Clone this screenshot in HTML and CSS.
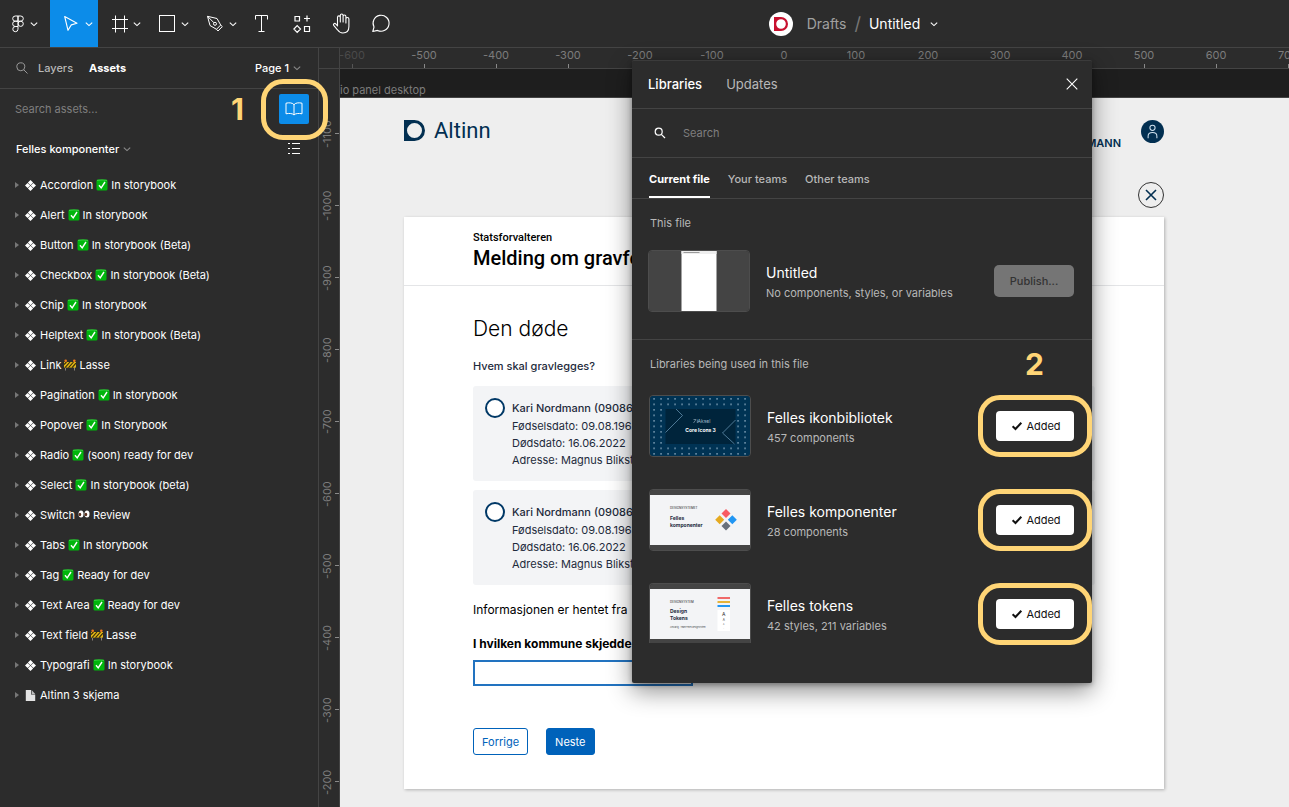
FILE: index.html
```html
<!DOCTYPE html>
<html lang="nb">
<head>
<meta charset="utf-8">
<title>Untitled – Libraries</title>
<link rel="stylesheet" href="styles.css">
</head>
<body>
<svg class="defs" aria-hidden="true">
  <symbol id="chev" viewBox="0 0 8 8"><path d="M.8 2.6 4 5.6 7.200 2.600" fill="none" stroke="currentColor" stroke-width="1.1"/></symbol>
  <symbol id="arrow" viewBox="0 0 4 6"><path d="M0 0 4 3 0 6z" fill="currentColor"/></symbol>
  <symbol id="dia" viewBox="0 0 11 11"><path d="M5.500 0 8.100 2.600 5.500 5.200 2.900 2.600zM5.500 5.800 8.100 8.400 5.500 11 2.900 8.400zM2.600 2.900 5.200 5.500 2.600 8.100 0 5.500zM8.400 2.900 11 5.500 8.400 8.100 5.800 5.500z" fill="#fff"/></symbol>
  <symbol id="ok" viewBox="0 0 12 12"><rect x=".5" y=".5" width="11" height="11" rx="1.500" fill="#00b60c"/><path d="M1 1.400q5-1 10 0" stroke="#5fe065" stroke-width=".6" fill="none"/><path d="M3 6.300 5.200 8.900 9 3" stroke="#fff" stroke-width="1.400" fill="none"/></symbol>
  <symbol id="barrier" viewBox="0 0 12 12"><path d="M1.500 3v8.500M10.500 3v8.500" stroke="#8a8178" stroke-width="1"/><rect x="0" y="3" width="12" height="5.600" fill="#e0b416"/><path d="M0 5.500 2.500 3M1 8.600 6 3M4.500 8.600 9.500 3M8 8.600l4-4.500" stroke="#33290a" stroke-width="1.100"/><circle cx="1.700" cy="1.700" r="1.300" fill="#f07a1a"/><circle cx="10.300" cy="1.700" r="1.300" fill="#f07a1a"/></symbol>
  <symbol id="eyes" viewBox="0 0 12 12"><ellipse cx="3" cy="5" rx="2.500" ry="3.600" fill="#fff"/><ellipse cx="9" cy="5" rx="2.500" ry="3.600" fill="#fff"/><ellipse cx="1.900" cy="5.500" rx="1.300" ry="1.800" fill="#5a2f1c"/><ellipse cx="7.900" cy="5.500" rx="1.300" ry="1.800" fill="#5a2f1c"/></symbol>
  <symbol id="page" viewBox="0 0 11 11"><path d="M.8 0H6v4.500h4.200V11H.8z" fill="#e3e3e3"/><path d="M6.600 0l3.600 3.900H6.600z" fill="#bdbdbd"/></symbol>
  <symbol id="tick" viewBox="0 0 12 12"><path d="M1.600 6.300 4.500 9 10.300 2.700" fill="none" stroke="#111" stroke-width="2"/></symbol>
</svg>

<header class="toolbar">
  <nav class="tools" aria-label="Tools">
    <button class="tool menu" aria-label="Main menu">
      <svg class="ico" viewBox="0 0 24 24"><g fill="none" stroke="#fff"><path d="M12 4H9.300a2.500 2.500 0 0 0 0 5.200H12zM12 4h2.700a2.500 2.500 0 0 1 0 5.200H12zM12 9.200H9.300a2.600 2.600 0 0 0 0 5.300H12zM9.300 14.500a2.600 2.600 0 1 0 2.700 2.700V14.500z"/><circle cx="14.700" cy="11.800" r="2.600"/></g></svg>
      <svg class="chev"><use href="#chev"/></svg>
    </button>
    <button class="tool active" aria-label="Move">
      <svg class="ico" viewBox="0 0 24 24"><path d="M4.700 4.500 17 11.300 11.300 12.900 8 18.300z" fill="none" stroke="#fff" stroke-width="1.100" stroke-linejoin="round"/></svg>
      <svg class="chev"><use href="#chev"/></svg>
    </button>
    <button class="tool" aria-label="Frame">
      <svg class="ico" viewBox="0 0 24 24"><path d="M7.500 3.500v17M16.500 3.500v17M4 7.500h16M4 16.500h16" stroke="#fff" fill="none"/></svg>
      <svg class="chev"><use href="#chev"/></svg>
    </button>
    <button class="tool" aria-label="Rectangle">
      <svg class="ico" viewBox="0 0 24 24"><rect x="3.500" y="3.500" width="15" height="16" fill="none" stroke="#fff"/></svg>
      <svg class="chev"><use href="#chev"/></svg>
    </button>
    <button class="tool" aria-label="Pen">
      <svg class="ico" viewBox="0 0 24 24"><g fill="none" stroke="#fff" stroke-linejoin="round"><path d="M3.500 4.300 6 13.500 12.500 17.300 16.700 13 13 6.500z"/><path d="M3.500 4.300 10 10.800M12.500 17.300 14 19 18.300 14.600 16.700 13"/><circle cx="11" cy="11.800" r="1.500"/></g></svg>
      <svg class="chev"><use href="#chev"/></svg>
    </button>
    <button class="tool single" aria-label="Text">
      <svg class="ico" viewBox="0 0 24 24"><path d="M5.500 7.500v-4h12v4M11.500 3.500v16M8.500 19.500h6" stroke="#fff" fill="none"/></svg>
    </button>
    <button class="tool single" aria-label="Resources">
      <svg class="ico" viewBox="0 0 24 24"><g fill="none" stroke="#fff" stroke-width="1.200"><path d="M5 4.500h4.500v4.500H5zM14.500 14.500h5v5h-5zM17 3.500v6M14 6.500h6M7.200 13.700 10.500 17l-3.300 3.300L3.900 17z"/></g></svg>
    </button>
    <button class="tool single" aria-label="Hand">
      <svg class="ico" viewBox="0 0 24 24"><path d="M7.500 14V5.300a1.400 1.400 0 0 1 2.800 0V10 3.400a1.400 1.400 0 0 1 2.800 0V10 4.400a1.400 1.400 0 0 1 2.800 0V11 7a1.400 1.400 0 0 1 3 0v7.500c0 4-2.400 6.500-6 6.500-2.800 0-4-1-5.400-3.200L3.700 13.400c-.9-1.500 1-2.600 2-1.500z" fill="none" stroke="#fff" stroke-width="1.100" stroke-linejoin="round"/></svg>
    </button>
    <button class="tool single" aria-label="Comment">
      <svg class="ico" viewBox="0 0 24 24"><path d="M2.800 19.500 4 15A8 8 0 1 1 7.500 18.400z" fill="none" stroke="#fff" stroke-width="1.100" stroke-linejoin="round"/></svg>
    </button>
  </nav>
  <div class="filename">
    <svg class="team" viewBox="0 0 24 24"><circle cx="12" cy="12" r="12" fill="#fff"/><path fill-rule="evenodd" d="M5 5h7a7 7 0 0 1 0 14H5zM12 7.200a4.800 4.800 0 1 0 0 9.600 4.800 4.800 0 0 0 0-9.600z" fill="#c8102e"/></svg>
    <span class="drafts">Drafts</span><span class="slash">/</span><span>Untitled</span>
    <svg class="chev"><use href="#chev"/></svg>
  </div>
</header>

<div class="workspace">
  <aside class="sidebar">
    <div class="side-tabs">
      <svg class="lens" viewBox="0 0 12 12"><g fill="none" stroke="#9a9a9a"><circle cx="4.800" cy="4.800" r="4"/><path d="M7.700 7.700 11.500 11.500"/></g></svg>
      <button class="side-tab">Layers</button>
      <button class="side-tab on">Assets</button>
      <button class="pages">Page 1 <svg class="chev dim"><use href="#chev"/></svg></button>
    </div>
    <div class="asset-search">
      <input type="text" aria-label="Search assets" placeholder="Search assets...">
      <span class="step step-one">1</span>
      <span class="ringed ring-book">
        <button class="book" aria-label="Team library"><svg viewBox="0 0 18 14"><path d="M9 2.800C8 .8 4 .4 1 1.200V11.800c3-.7 7-.4 8 1.200 1-1.600 5-1.900 8-1.200V1.200C14 .4 10 .8 9 2.800zV13" fill="none" stroke="#fff"/></svg></button>
      </span>
    </div>
    <div class="lib-head">
      <button class="lib-name">Felles komponenter <svg class="chev dim"><use href="#chev"/></svg></button>
      <button class="list-btn" aria-label="Show as list"><svg viewBox="0 0 12 12"><path d="M0 .5h2M4 .5h8M0 5.500h2M4 5.500h8M0 10.500h2M4 10.500h8" stroke="#fff"/></svg></button>
    </div>
    <ul class="assets">
      <li><svg class="arr"><use href="#arrow"/></svg><svg class="dia"><use href="#dia"/></svg><span>Accordion</span><svg class="emo"><use href="#ok"/></svg><span>In storybook</span></li>
      <li><svg class="arr"><use href="#arrow"/></svg><svg class="dia"><use href="#dia"/></svg><span>Alert</span><svg class="emo"><use href="#ok"/></svg><span>In storybook</span></li>
      <li><svg class="arr"><use href="#arrow"/></svg><svg class="dia"><use href="#dia"/></svg><span>Button</span><svg class="emo"><use href="#ok"/></svg><span>In storybook (Beta)</span></li>
      <li><svg class="arr"><use href="#arrow"/></svg><svg class="dia"><use href="#dia"/></svg><span>Checkbox</span><svg class="emo"><use href="#ok"/></svg><span>In storybook (Beta)</span></li>
      <li><svg class="arr"><use href="#arrow"/></svg><svg class="dia"><use href="#dia"/></svg><span>Chip</span><svg class="emo"><use href="#ok"/></svg><span>In storybook</span></li>
      <li><svg class="arr"><use href="#arrow"/></svg><svg class="dia"><use href="#dia"/></svg><span>Helptext</span><svg class="emo"><use href="#ok"/></svg><span>In storybook (Beta)</span></li>
      <li><svg class="arr"><use href="#arrow"/></svg><svg class="dia"><use href="#dia"/></svg><span>Link</span><svg class="emo"><use href="#barrier"/></svg><span>Lasse</span></li>
      <li><svg class="arr"><use href="#arrow"/></svg><svg class="dia"><use href="#dia"/></svg><span>Pagination</span><svg class="emo"><use href="#ok"/></svg><span>In storybook</span></li>
      <li><svg class="arr"><use href="#arrow"/></svg><svg class="dia"><use href="#dia"/></svg><span>Popover</span><svg class="emo"><use href="#ok"/></svg><span>In Storybook</span></li>
      <li><svg class="arr"><use href="#arrow"/></svg><svg class="dia"><use href="#dia"/></svg><span>Radio</span><svg class="emo"><use href="#ok"/></svg><span>(soon) ready for dev</span></li>
      <li><svg class="arr"><use href="#arrow"/></svg><svg class="dia"><use href="#dia"/></svg><span>Select</span><svg class="emo"><use href="#ok"/></svg><span>In storybook (beta)</span></li>
      <li><svg class="arr"><use href="#arrow"/></svg><svg class="dia"><use href="#dia"/></svg><span>Switch</span><svg class="emo"><use href="#eyes"/></svg><span>Review</span></li>
      <li><svg class="arr"><use href="#arrow"/></svg><svg class="dia"><use href="#dia"/></svg><span>Tabs</span><svg class="emo"><use href="#ok"/></svg><span>In storybook</span></li>
      <li><svg class="arr"><use href="#arrow"/></svg><svg class="dia"><use href="#dia"/></svg><span>Tag</span><svg class="emo"><use href="#ok"/></svg><span>Ready for dev</span></li>
      <li><svg class="arr"><use href="#arrow"/></svg><svg class="dia"><use href="#dia"/></svg><span>Text Area</span><svg class="emo"><use href="#ok"/></svg><span>Ready for dev</span></li>
      <li><svg class="arr"><use href="#arrow"/></svg><svg class="dia"><use href="#dia"/></svg><span>Text field</span><svg class="emo"><use href="#barrier"/></svg><span>Lasse</span></li>
      <li><svg class="arr"><use href="#arrow"/></svg><svg class="dia"><use href="#dia"/></svg><span>Typografi</span><svg class="emo"><use href="#ok"/></svg><span>In storybook</span></li>
      <li><svg class="arr"><use href="#arrow"/></svg><svg class="dia"><use href="#page"/></svg><span>Altinn 3 skjema</span></li>
    </ul>
  </aside>

  <main class="stage">
    <div class="corner"></div>
    <div class="ruler-x">
      <span class="faint">-600</span><span>-500</span><span>-400</span><span>-300</span><span>-200</span><span>-100</span><span>0</span><span>100</span><span>200</span><span>300</span><span>400</span><span>500</span><span>600</span><span>700</span>
    </div>
    <div class="ruler-y">
      <span>-1100</span><span>-1000</span><span>-900</span><span>-800</span><span>-700</span><span>-600</span><span>-500</span><span>-400</span><span>-300</span><span>-200</span>
    </div>
    <div class="canvas">
      <div class="frame-label">io panel desktop</div>
      <div class="frame">
        <div class="page">
          <div class="page-head">
            <svg class="logo" viewBox="0 0 21 21"><path fill-rule="evenodd" d="M0 0h10.500a10.500 10.500 0 0 1 0 21H0zM10.500 3a7.500 7.500 0 1 0 0 15 7.500 7.500 0 0 0 0-15z" fill="#022f51"/></svg>
            <span class="brand">Altinn</span>
            <span class="user">NORDMANN</span>
            <svg class="avatar" viewBox="0 0 22 22"><circle cx="11" cy="11" r="11" fill="#022f51"/><g fill="none" stroke="#cfe0ee"><circle cx="11" cy="7.500" r="2.500"/><path d="M6.800 17.500v-2q0-3.500 4.200-3.500t4.200 3.500v2"/></g></svg>
          </div>
          <div class="close-row">
            <button class="round-close" aria-label="Lukk"><svg viewBox="0 0 12 12"><path d="M1 1 11 11M11 1 1 11" stroke="#022f51" stroke-width="1.600"/></svg></button>
          </div>
          <section class="card">
            <div class="card-head">
              <p class="owner">Statsforvalteren</p>
              <h1>Melding om gravferd</h1>
            </div>
            <form class="card-body">
              <h2>Den døde</h2>
              <p class="question">Hvem skal gravlegges?</p>
              <label class="option"><input type="radio" name="p"><span class="opt-text"><strong>Kari Nordmann (09086)</strong><span>Fødselsdato: 09.08.196</span><span>Dødsdato: 16.06.2022</span><span>Adresse: Magnus Blikst</span></span></label>
              <label class="option"><input type="radio" name="p"><span class="opt-text"><strong>Kari Nordmann (09086)</strong><span>Fødselsdato: 09.08.196</span><span>Dødsdato: 16.06.2022</span><span>Adresse: Magnus Blikst</span></span></label>
              <p class="info">Informasjonen er hentet fra</p>
              <label class="field-label" for="kommune">I hvilken kommune skjedde</label>
              <input class="field" id="kommune" type="text">
              <div class="actions">
                <button type="button" class="btn">Forrige</button>
                <button type="button" class="btn primary">Neste</button>
              </div>
            </form>
          </section>
        </div>
      </div>
    </div>
  </main>

  <div class="dialog" role="dialog" aria-label="Libraries">
    <div class="dlg-head">
      <button class="on">Libraries</button>
      <button>Updates</button>
      <button class="dlg-close" aria-label="Close"><svg viewBox="0 0 12 12"><path d="M.7.7 11.300 11.300M11.300.7.7 11.300" stroke="#fff" stroke-width="1.100"/></svg></button>
    </div>
    <div class="dlg-search">
      <svg viewBox="0 0 12 12"><g fill="none" stroke="#fff" stroke-width="1.200"><circle cx="4.700" cy="4.700" r="3.500"/><path d="M7.300 7.300 11 11"/></g></svg>
      <input type="text" aria-label="Search libraries" placeholder="Search">
    </div>
    <div class="dlg-tabs">
      <button class="on">Current file</button>
      <button>Your teams</button>
      <button>Other teams</button>
    </div>
    <section class="this-file">
      <h3>This file</h3>
      <div class="lib">
        <svg class="thumb" viewBox="0 0 100 60"><rect width="100" height="60" fill="#444"/><rect x="32.500" width="35" height="60" fill="#fff"/><path d="M32.500 0h35v3h-35z" fill="#eee"/><path d="M34.500 1.500h16" stroke="#777" stroke-width=".7"/></svg>
        <div class="lib-text"><strong>Untitled</strong><span>No components, styles, or variables</span></div>
        <button class="publish" disabled>Publish...</button>
      </div>
    </section>
    <section class="used">
      <div class="used-head"><h3>Libraries being used in this file</h3><span class="step">2</span></div>
      <div class="lib">
        <svg class="thumb" viewBox="0 0 100 60">
          <defs><pattern id="dots" x="3" y="2" width="7" height="5.500" patternUnits="userSpaceOnUse"><rect x=".4" y=".2" width="1.300" height="1.300" fill="#a9c3d6"/></pattern></defs>
          <rect width="100" height="60" fill="#003354"/><rect width="100" height="60" fill="url(#dots)"/><rect x="15.500" y="13" width="70" height="35" fill="#00243b"/>
          <path d="M26 13 32.500 19.500 15.500 36.500M85.500 24 72.500 37 84.500 48" fill="none" stroke="#6f9dbd" stroke-width=".7"/>
          <path d="M43.500 23.500h2.500l-2.500 3.500M47.300 23.500v3.500" fill="none" stroke="#9fb6c6" stroke-width=".6"/>
          <text x="54" y="27" text-anchor="middle" class="t-small t-light">Aksel</text><text x="50.500" y="36" text-anchor="middle" class="t-head t-white">Core Icons 3</text>
        </svg>
        <div class="lib-text"><strong>Felles ikonbibliotek</strong><span>457 components</span></div>
        <span class="ringed"><button class="added"><svg viewBox="0 0 12 12"><use href="#tick"/></svg>Added</button></span>
      </div>
      <div class="lib">
        <svg class="thumb" viewBox="0 0 100 60">
          <rect width="100" height="60" fill="#444"/><rect y="5" width="100" height="50" fill="#f3f4f6"/>
          <text x="20" y="18.500" class="t-tiny">DESIGNSYSTEMET</text><text x="20" y="30" class="t-head">Felles</text><text x="20" y="37" class="t-head">komponenter</text>
          <path d="M76 19l4.500 4.500L76 28l-4.500-4.500z" fill="#f85c63"/><path d="M69.700 25.200l4.500 4.500-4.500 4.500-4.500-4.500z" fill="#e5aa20"/><path d="M82.300 25.200l4.500 4.500-4.500 4.500-4.500-4.500z" fill="#2196f3"/><path d="M76 31.400l4.500 4.500-4.500 4.500-4.500-4.500z" fill="#68707c"/>
        </svg>
        <div class="lib-text"><strong>Felles komponenter</strong><span>28 components</span></div>
        <span class="ringed"><button class="added"><svg viewBox="0 0 12 12"><use href="#tick"/></svg>Added</button></span>
      </div>
      <div class="lib">
        <svg class="thumb cut" viewBox="0 0 100 60" preserveAspectRatio="xMidYMin slice">
          <rect width="100" height="60" fill="#444"/><rect y="5" width="100" height="50" fill="#f3f4f6"/>
          <text x="20" y="18.500" class="t-tiny">DESIGNSYSTEM</text><text x="20" y="29" class="t-head">Design</text><text x="20" y="36" class="t-head">Tokens</text><text x="20" y="43.500" class="t-micro">Ansvarlig · Team Felles designsystem</text>
          <path d="M67.500 14h12.500" stroke="#f06a6a" stroke-width="2"/><path d="M67.500 18h12.500" stroke="#e5b33a" stroke-width="2"/><path d="M67.500 22h12.500" stroke="#2196f3" stroke-width="2"/>
          <rect x="67.500" y="26" width="12.500" height="21" fill="#fff"/><text x="73.700" y="32" text-anchor="middle" class="t-small">A</text><text x="73.700" y="37" text-anchor="middle" class="t-tiny">A</text><text x="73.700" y="41" text-anchor="middle" class="t-micro">A</text><text x="73.700" y="44.500" text-anchor="middle" class="t-micro">-</text>
        </svg>
        <div class="lib-text"><strong>Felles tokens</strong><span>42 styles, 211 variables</span></div>
        <span class="ringed"><button class="added"><svg viewBox="0 0 12 12"><use href="#tick"/></svg>Added</button></span>
      </div>
    </section>
  </div>
</div>
</body>
</html>
```
FILE: styles.css
```css
:root {
  --bg: #2c2c2c;
  --line: #444;
  --muted: #7f7f7f;
  --soft: #b8b8b8;
  --blue: #0c8ce9;
  --mark: #ffd576;
  --navy: #022f51;
  --action: #0062ba;
}
* { box-sizing: border-box; }
body {
  margin: 0;
  height: 100vh;
  display: flex;
  flex-direction: column;
  overflow: hidden;
  background: var(--bg);
  color: #fff;
  font: 11px/16px Inter, "Liberation Sans", sans-serif;
}
button, input { font: inherit; color: inherit; }
button { padding: 0; border: 0; background: none; }
h1, h2, h3, p, ul { margin: 0; padding: 0; }
svg { display: block; flex: none; }
.defs { position: absolute; width: 0; height: 0; }
.chev { width: 8px; height: 8px; }
.dim { color: #8c8c8c; }

/* toolbar */
.toolbar { display: flex; height: 48px; flex: none; border-bottom: 1px solid var(--line); }
.tools { display: flex; }
.tool { display: flex; align-items: center; gap: 1px; width: 48px; padding-left: 10px; }
.tool.menu { width: 50px; padding-left: 6px; gap: 0; }
.tool.single { width: 40px; padding-left: 8px; }
.tool.active { background: var(--blue); }
.ico { width: 24px; height: 24px; }
.filename { flex: 1; display: flex; align-items: center; justify-content: center; padding-left: 16px; font-size: 14px; }
.team { width: 24px; height: 24px; margin-right: 14px; }
.drafts { color: #a0a0a0; }
.slash { margin: 0 8px; color: #777; font-size: 18px; }
.filename .chev { margin-left: 10px; }

.workspace { position: relative; flex: 1; display: flex; min-height: 0; }

/* left panel */
.sidebar { width: 319px; flex: none; border-right: 1px solid var(--line); }
.side-tabs { display: flex; align-items: center; height: 41px; padding: 0 17px 0 16px; gap: 16px; border-bottom: 1px solid var(--line); }
.lens { width: 12px; height: 12px; margin-right: -6px; }
.side-tab { color: var(--soft); font-weight: 500; }
.side-tab.on { color: #fff; font-weight: 700; }
.pages { display: flex; align-items: center; gap: 4px; margin-left: auto; font-weight: 500; }
.asset-search { display: flex; align-items: center; height: 40px; padding: 0 9px 0 15px; }
.asset-search input { flex: 1; min-width: 0; padding: 0; border: 0; outline: 0; background: none; }
input::placeholder { color: var(--muted); opacity: 1; }
.step { color: var(--mark); font: 700 30px/32px Inter, sans-serif; }
.step-one { margin-right: 35px; }
.book { display: grid; place-items: center; width: 30px; height: 30px; border-radius: 2px; background: var(--blue); }
.book svg { width: 18px; height: 14px; }
.ringed { position: relative; display: block; }
.ringed::after {
  content: "";
  position: absolute;
  z-index: 3;
  inset: -16px -18px -16px -18px;
  border: 5px solid var(--mark);
  border-radius: 22px;
  pointer-events: none;
}
.ring-book::after { inset: -15px -19px -16px -18px; }
.lib-head { display: flex; align-items: center; justify-content: space-between; height: 40px; padding: 0 18px 0 16px; }
.lib-name { display: flex; align-items: center; gap: 4px; font-weight: 500; }
.list-btn svg { width: 12px; height: 12px; }
.assets { list-style: none; padding-top: 1px; }
.assets li { display: flex; align-items: center; gap: 3px; height: 30px; padding-left: 15px; }
.arr { width: 4px; height: 6px; margin-right: 3px; color: #777; }
.dia { width: 11px; height: 11px; margin-right: 1px; }
.emo { width: 12px; height: 12px; }

/* rulers and canvas */
.stage {
  flex: 1;
  min-width: 0;
  display: grid;
  grid-template: 21px minmax(0, 1fr) / 21px minmax(0, 1fr);
  color: #7c7c7c;
}
.corner { border: solid var(--line); border-width: 0 1px 1px 0; }
.ruler-x { display: flex; overflow: hidden; border-bottom: 1px solid var(--line); }
.ruler-x span {
  flex: none;
  width: 72px;
  height: 20px;
  line-height: 15px;
  text-align: center;
  background: linear-gradient(#8a8a8a, #8a8a8a) 50% 100% / 1px 4px no-repeat;
}
.ruler-x span:first-child { margin-left: -24px; }
.ruler-x .faint { color: #4a4a4a; background-image: linear-gradient(#555, #555); }
.ruler-y { overflow: hidden; padding-top: 29px; border-right: 1px solid var(--line); }
.ruler-y span {
  display: block;
  width: 20px;
  height: 72px;
  padding-left: 5px;
  writing-mode: vertical-rl;
  transform: rotate(180deg);
  text-align: center;
  line-height: 16px;
  background: linear-gradient(#8a8a8a, #8a8a8a) 0 50% / 4px 1px no-repeat;
}
.canvas { display: flex; flex-direction: column; overflow: hidden; background: #1e1e1e; }
.frame-label { height: 29px; padding-top: 13px; border-bottom: 1px solid var(--line); }
.frame { flex: 1; background: #eee; color: #000; }
.page { max-width: 824px; padding-left: 64px; }
.page-head { display: flex; align-items: flex-start; height: 48px; padding-top: 22px; }
.logo { width: 21px; height: 21px; margin-right: 9px; }
.brand { color: var(--navy); font: 400 22px/22px Roboto, sans-serif; }
.user { margin: 15px 20px 0 auto; color: var(--navy); font-weight: 600; }
.avatar { width: 23px; height: 23px; }
.close-row { display: flex; justify-content: flex-end; padding: 36px 0 9px; }
.round-close { display: grid; place-items: center; width: 26px; height: 26px; border: 1px solid #333; border-radius: 50%; }
.round-close svg { width: 12px; height: 12px; }
.card { background: #fff; box-shadow: 1px 1px 3px rgba(0, 0, 0, .25); }
.card-head { height: 69px; padding: 13px 69px 0; border-bottom: 1px solid #e4e5e7; }
.owner { font: 500 11px/16px Roboto, sans-serif; }
h1 { font: 500 20px/25px Roboto, sans-serif; }
.card-body { padding: 30px 69px 34px; }
h2 { font-size: 21px; line-height: 26px; font-weight: 300; margin-bottom: 16px; }
.question { color: #1e2b3c; font-weight: 500; margin-bottom: 12px; }
.option { display: flex; gap: 6px; height: 95px; margin-bottom: 9px; padding: 12px; border-radius: 3px; background: #f3f4f6; color: #1e2b3c; }
.option input { appearance: none; flex: none; width: 20px; height: 20px; margin: 0 1px 0 0; border: 2px solid #003866; border-radius: 50%; background: #fff; }
.opt-text { display: flex; flex-direction: column; line-height: 17px; }
.opt-text strong { font-weight: 500; line-height: 20px; }
.info { font-size: 12px; margin: 17px 0 18px; }
.field-label { display: block; font-size: 12px; font-weight: 700; }
.field { display: block; width: 220px; height: 26px; margin-top: 8px; border: 2px solid #2273c0; background: #fff; }
.actions { display: flex; gap: 18px; margin-top: 42px; }
.btn { height: 27px; padding: 0 8px; border: 1px solid var(--action); border-radius: 3px; color: var(--action); }
.btn.primary { background: var(--action); color: #fff; }

/* libraries dialog */
.dialog {
  position: absolute;
  z-index: 2;
  top: 12px;
  left: 632px;
  width: 460px;
  padding-bottom: 38px;
  border-top: 1px solid #3b3b3b;
  border-radius: 2px;
  background: var(--bg);
  box-shadow: 0 2px 5px rgba(0, 0, 0, .3), 0 8px 24px rgba(0, 0, 0, .45);
}
.dlg-head { display: flex; align-items: center; gap: 24px; height: 48px; padding: 0 14px 2px 16px; border-bottom: 1px solid var(--line); font-size: 13px; color: var(--soft); }
.dlg-head .on { color: #fff; font-weight: 500; }
.dlg-close { margin-left: auto; }
.dlg-close svg { width: 12px; height: 12px; }
.dlg-search { display: flex; align-items: center; gap: 17px; height: 49px; padding: 0 22px; border-bottom: 1px solid var(--line); }
.dlg-search svg { width: 12px; height: 12px; }
.dlg-search input { flex: 1; padding: 0; border: 0; outline: 0; background: none; }
.dlg-tabs { display: flex; gap: 18px; height: 41px; padding: 0 17px; border-bottom: 1px solid var(--line); color: var(--soft); }
.dlg-tabs button { border-bottom: 2px solid transparent; font-weight: 500; padding-top: 4px; }
.dlg-tabs .on { color: #fff; font-weight: 700; border-color: #fff; }
.this-file { height: 141px; padding: 16px 18px 0 16px; border-bottom: 1px solid var(--line); }
h3 { padding-left: 2px; color: var(--soft); font: inherit; }
.this-file .lib { margin-top: 19px; }
.lib { display: flex; align-items: center; gap: 16px; height: 62px; }
.thumb { width: 102px; height: 62px; border: 1px solid #4d4d4d; border-radius: 4px; }
.thumb.cut { align-self: flex-start; height: 60px; border-bottom: 0; border-radius: 4px 4px 0 0; }
.lib-text { flex: 1; display: flex; flex-direction: column; gap: 2px; padding-top: 2px; color: var(--soft); }
.lib-text strong { color: #fff; font-size: 14px; line-height: 20px; font-weight: 400; }
.publish { width: 80px; height: 32px; border-radius: 5px; background: #757575; color: #333; font-weight: 500; }
.used { padding: 8px 18px 0 17px; }
.used h3 { padding-left: 1px; }
.used-head { display: flex; justify-content: space-between; align-items: center; height: 32px; padding-right: 30px; margin-bottom: 15px; }
.used .lib + .lib { margin-top: 32px; }
.added { display: flex; align-items: center; justify-content: center; gap: 3px; width: 78px; height: 30px; padding-left: 2px; border-radius: 4px; background: #fff; color: #111; }
.added svg { width: 12px; height: 12px; }

.t-head { font: 700 5px Inter, sans-serif; fill: #1e2b3c; }
.t-small { font: 400 5px Inter, sans-serif; fill: #333; }
.t-tiny { font: 500 3px Inter, sans-serif; fill: #444; }
.t-micro { font: 400 2px Inter, sans-serif; fill: #444; }
.t-white { fill: #fff; }
.t-light { fill: #9fb6c6; }
```
